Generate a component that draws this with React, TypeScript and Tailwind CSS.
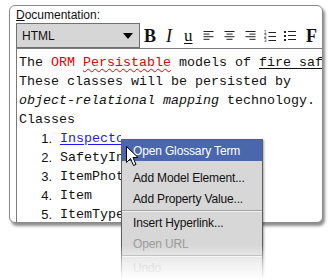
import React from "react";

const sans = { fontFamily: '"Liberation Sans", Arial, sans-serif' };
const serif = { fontFamily: '"Liberation Serif", "Times New Roman", serif' };
const mono = { fontFamily: '"Liberation Mono", "Courier New", monospace' };
const menuFont = { fontFamily: '"Liberation Sans", Arial, sans-serif' };

function AlignIcon({ kind }: { kind: "left" | "center" | "right" }) {
  const lines = [10, 6, 10, 6];
  return (
    <svg width="11" height="9" viewBox="0 0 11 9" className="block">
      {lines.map((w, i) => {
        const x = kind === "left" ? 0.5 : kind === "right" ? 10.5 - w : (11 - w) / 2;
        const y = 0.5 + i * 2.6;
        return <line key={i} x1={x} y1={y} x2={x + w} y2={y} stroke="#222" strokeWidth="1" />;
      })}
    </svg>
  );
}

function NumListIcon() {
  return (
    <svg width="12" height="12" viewBox="0 0 12 12" className="block">
      <text x="0" y="4" fontSize="4.5" fontFamily="Liberation Sans, Arial" fill="#222">1</text>
      <text x="0" y="8" fontSize="4.5" fontFamily="Liberation Sans, Arial" fill="#222">2</text>
      <text x="0" y="12" fontSize="4.5" fontFamily="Liberation Sans, Arial" fill="#222">3</text>
      <line x1="4.5" y1="2.5" x2="12" y2="2.5" stroke="#222" strokeWidth="1" />
      <line x1="4.5" y1="6.5" x2="12" y2="6.5" stroke="#222" strokeWidth="1" />
      <line x1="4.5" y1="10.5" x2="12" y2="10.5" stroke="#222" strokeWidth="1" />
    </svg>
  );
}

function BulletListIcon() {
  return (
    <svg width="12" height="11" viewBox="0 0 12 11" className="block">
      <rect x="0" y="1" width="2" height="2" fill="#222" />
      <rect x="0" y="5" width="2" height="2" fill="#222" />
      <rect x="0" y="9" width="2" height="2" fill="#222" />
      <line x1="4" y1="1.5" x2="12" y2="1.5" stroke="#222" strokeWidth="1" />
      <line x1="4" y1="5.5" x2="12" y2="5.5" stroke="#222" strokeWidth="1" />
      <line x1="4" y1="9.5" x2="12" y2="9.5" stroke="#222" strokeWidth="1" />
    </svg>
  );
}

function ListRow({ n, children }: { n: number; children: React.ReactNode }) {
  return (
    <div className="flex h-[19px] items-center whitespace-nowrap">
      <span className="w-[33px] text-right text-[13px] text-[#111]" style={sans}>
        {n}.
      </span>
      <span className="ml-[8px]">{children}</span>
    </div>
  );
}

export default function App() {
  return (
    <div className="relative h-[280px] w-[332px] overflow-hidden bg-white">
      {/* Panel */}
      <div className="ml-[9px] mt-[5px] h-[218px] w-[314px] overflow-hidden rounded-[6px] border border-[#8a8a8a] bg-white shadow-[2px_3px_3px_rgba(0,0,0,0.45)]">
        <div className="flex h-full flex-col pl-[6px] pt-[2px]">
          <div className="h-[15px] text-[12px] leading-[15px] text-[#111]" style={sans}>
            <span className="underline">D</span>ocumentation:
          </div>
          <div className="flex h-[25px] items-start">
            <div className="flex h-[25px] w-[124px] items-center justify-between border border-[#707070] bg-[#d6d6d6] pl-[5px] pr-[6px]">
              <span className="text-[12px] text-[#111]" style={sans}>HTML</span>
              <svg width="10" height="6" viewBox="0 0 10 6" className="block">
                <polygon points="0,0 10,0 5,6" fill="#000" />
              </svg>
            </div>
            <div className="flex h-[25px] items-center">
              <span className="ml-[4px] w-[13px] text-[18px] font-bold leading-none text-[#111]" style={serif}>B</span>
              <span className="ml-[9px] w-[8px] text-[18px] italic leading-none text-[#111]" style={serif}>I</span>
              <span className="ml-[10px] w-[10px] text-[17px] leading-none text-[#111] underline underline-offset-2" style={serif}>u</span>
              <span className="ml-[9px]"><AlignIcon kind="left" /></span>
              <span className="ml-[10px]"><AlignIcon kind="center" /></span>
              <span className="ml-[10px]"><AlignIcon kind="right" /></span>
              <span className="ml-[8px]"><NumListIcon /></span>
              <span className="ml-[8px]"><BulletListIcon /></span>
              <span className="ml-[10px] w-[9px] text-[18px] font-bold leading-none text-[#111]" style={serif}>F</span>
            </div>
          </div>
          <div className="flex-1 border-l border-t border-[#7a7a7a] pl-[2px] pt-[4px] text-[13.33px] leading-[19px] text-[#111]" style={mono}>
            <div className="h-[19px] whitespace-nowrap">
              The <span className="text-[#e60000]">ORM</span>{" "}
              <span className="text-[#e60000] underline decoration-wavy decoration-[#e60000] decoration-1 underline-offset-2">Persistable</span> models of{" "}
              <span className="underline underline-offset-2">fire safety inspections.</span>
            </div>
            <div className="h-[19px] whitespace-nowrap">These classes will be persisted by</div>
            <div className="h-[19px] whitespace-nowrap">
              <i>object-relational mapping</i> technology.
            </div>
            <div className="h-[19px] whitespace-nowrap">Classes</div>
            <ListRow n={1}>
              <span className="text-[#1a1aee] underline underline-offset-2">InspectorRecord</span>
            </ListRow>
            <ListRow n={2}>SafetyInspection</ListRow>
            <ListRow n={3}>ItemPhotograph</ListRow>
            <ListRow n={4}>Item</ListRow>
            <ListRow n={5}>ItemType</ListRow>
          </div>
        </div>
      </div>

      {/* Context menu (with a white margin strip above it) */}
      <div className="absolute left-[121px] top-[127px] w-[142px]" style={menuFont}>
        <div className="h-[12px] bg-white" />
        <div className="h-[145px] border border-[#5e5e5e] bg-[#d7d7d7] text-[12px] tracking-[-0.15px] shadow-[1px_1px_2px_rgba(0,0,0,0.35)]">
          <div className="flex h-[21px] items-center bg-[#4a67ad] pl-[11px] text-white">Open Glossary Term</div>
          <div className="h-[6px]" />
          <div className="flex h-[21px] items-center pl-[11px] text-[#111]">Add Model Element...</div>
          <div className="flex h-[21px] items-center pl-[11px] text-[#111]">Add Property Value...</div>
          <div className="flex h-[3px] flex-col justify-center">
            <div className="h-px bg-[#a2a2a2]" />
            <div className="h-px bg-[#f2f2f2]" />
          </div>
          <div className="flex h-[21px] items-center pl-[11px] text-[#111]">Insert Hyperlink...</div>
          <div className="flex h-[21px] items-center pl-[11px] text-[#9a9a9a]">Open URL</div>
          <div className="flex h-[3px] flex-col justify-center">
            <div className="h-px bg-[#a2a2a2]" />
            <div className="h-px bg-[#f2f2f2]" />
          </div>
          <div className="flex h-[21px] items-center pl-[11px] text-[#9a9a9a]">Undo</div>
        </div>
      </div>

      {/* Fade at bottom */}
      <div className="absolute left-[110px] top-[245px] h-[35px] w-[170px] bg-gradient-to-b from-white/0 via-white/60 to-white" />

      {/* Mouse cursor */}
      <svg className="absolute left-[126px] top-[146px]" width="14" height="21" viewBox="0 0 14 21">
        <path
          d="M0.5 0.5 L0.5 16.5 L4.5 12.5 L7.5 19.5 L10 18.5 L7 11.5 L12 11.5 Z"
          fill="#fff"
          stroke="#000"
          strokeWidth="1"
          strokeLinejoin="miter"
        />
      </svg>
    </div>
  );
}
